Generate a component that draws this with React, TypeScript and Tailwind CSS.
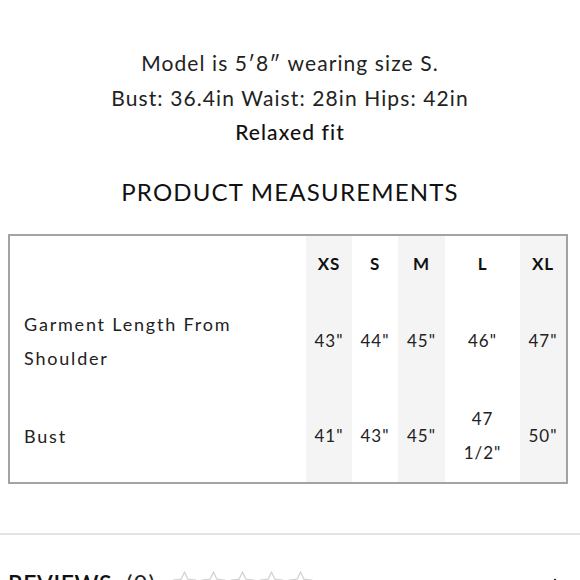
import React from "react";

const font = { fontFamily: "Lato, 'Open Sans', sans-serif" };

function Star() {
  return (
    <svg width="29" height="28" viewBox="0 0 24 24" fill="none" stroke="#d2d2d2" strokeWidth="1.1" strokeLinejoin="round">
      <path d="M12 2.5l2.9 6.2 6.8.8-5 4.7 1.3 6.7L12 17.6l-6 3.3 1.3-6.7-5-4.7 6.8-.8z" />
    </svg>
  );
}

export default function App() {
  const shade = "bg-[#f4f4f4]";
  const cols = [
    { h: "XS", a: ['43"'], b: ['41"'], s: true },
    { h: "S", a: ['44"'], b: ['43"'], s: false },
    { h: "M", a: ['45"'], b: ['45"'], s: true },
    { h: "L", a: ['46"'], b: ["47", '1/2"'], s: false },
    { h: "XL", a: ['47"'], b: ['50"'], s: true },
  ];
  return (
    <div className="w-[580px] h-[580px] overflow-hidden bg-white text-[#1a1a1a]" style={font}>
      <div className="flex flex-col items-center pt-[46px] text-[21px] leading-[34.5px] tracking-[1.1px] text-[#222]">
        <div>Model is 5′8″ wearing size S.</div>
        <div>Bust: 36.4in Waist: 28in Hips: 42in</div>
        <div className="font-medium text-[#111]">Relaxed fit</div>
      </div>
      <div className="mt-[26px] text-center text-[24px] leading-[32px] tracking-[1.2px] text-[#111]">
        PRODUCT MEASUREMENTS
      </div>
      <div className="mt-[26px] ml-[8px] w-[560px] border-2 border-[#a3a3a3] grid grid-cols-[296px_46px_46px_47px_75px_46px] grid-rows-[56px_98px_92px] text-[17px] tracking-[1px] text-[#222]">
        <div />
        {cols.map((c) => (
          <div key={c.h} className={`flex items-center justify-center font-bold text-[#111] tracking-[0.8px] ${c.s ? shade : ""}`}>
            {c.h}
          </div>
        ))}
        <div className="flex flex-col justify-center pl-[14px] leading-[34px] text-[18px] tracking-[1.8px]">
          <div>Garment Length From</div>
          <div>Shoulder</div>
        </div>
        {cols.map((c) => (
          <div key={c.h + "a"} className={`flex flex-col items-center justify-center leading-[34px] ${c.s ? shade : ""}`}>
            {c.a.map((t) => (
              <div key={t}>{t}</div>
            ))}
          </div>
        ))}
        <div className="flex flex-col justify-center pl-[14px] leading-[34px] text-[18px] tracking-[1.8px]">
          <div>Bust</div>
        </div>
        {cols.map((c) => (
          <div key={c.h + "b"} className={`flex flex-col items-center justify-center leading-[34px] ${c.s ? shade : ""}`}>
            {c.b.map((t) => (
              <div key={t}>{t}</div>
            ))}
          </div>
        ))}
      </div>
      <div className="mt-[49px] h-[2px] bg-[#e4e4e4]" />
      <div className="mt-[34px] flex items-center pl-[8px] pr-[8px]">
        <span className="text-[23px] leading-[24px] font-semibold tracking-[0.6px] text-[#111]">REVIEWS</span>
        <span className="ml-[14px] text-[23px] leading-[24px] tracking-[1.5px] text-[#222]">(0)</span>
        <div className="ml-[14px] flex">
          <Star />
          <Star />
          <Star />
          <Star />
          <Star />
        </div>
        <svg className="ml-auto mr-[8px]" width="18" height="12" viewBox="0 0 18 12" fill="none" stroke="#111" strokeWidth="2">
          <path d="M2 10l7-7 7 7" />
        </svg>
      </div>
    </div>
  );
}
